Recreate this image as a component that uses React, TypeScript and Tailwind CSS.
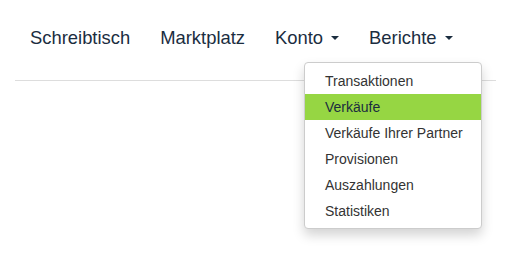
const items = [
  "Transaktionen",
  "Verkäufe",
  "Verkäufe Ihrer Partner",
  "Provisionen",
  "Auszahlungen",
  "Statistiken",
];

function Caret() {
  return (
    <span className="ml-[8px] inline-block h-0 w-0 border-x-[4px] border-t-[4px] border-x-transparent border-t-[#1b2d3f] align-middle" />
  );
}

export default function App() {
  return (
    <div className="relative h-[266px] w-[511px] bg-white font-['Liberation_Sans',Arial,sans-serif]">
      <div className="mx-[15px] border-b border-[#dddddd] pb-[32px] pt-[28px]">
        <ul className="flex text-[18.4px] leading-[20px] text-[#1b2d3f]">
          <li className="px-[15px]">Schreibtisch</li>
          <li className="px-[15px]">Marktplatz</li>
          <li className="flex items-center px-[15px]">
            Konto
            <Caret />
          </li>
          <li className="flex items-center px-[15px]">
            Berichte
            <Caret />
          </li>
        </ul>
      </div>

      <ul className="absolute left-[304px] top-[62px] w-[178px] rounded-[4px] border border-[#cccccc] bg-white pb-[4px] pt-[5px] text-[14px] shadow-[0_6px_12px_rgba(0,0,0,0.175)]">
        {items.map((item) => (
          <li
            key={item}
            className={`flex h-[26px] items-center pl-[20px] ${
              item === "Verkäufe" ? "bg-[#96d643] text-[#1b2d3f]" : "text-[#333333]"
            }`}
          >
            {item}
          </li>
        ))}
      </ul>
    </div>
  );
}
